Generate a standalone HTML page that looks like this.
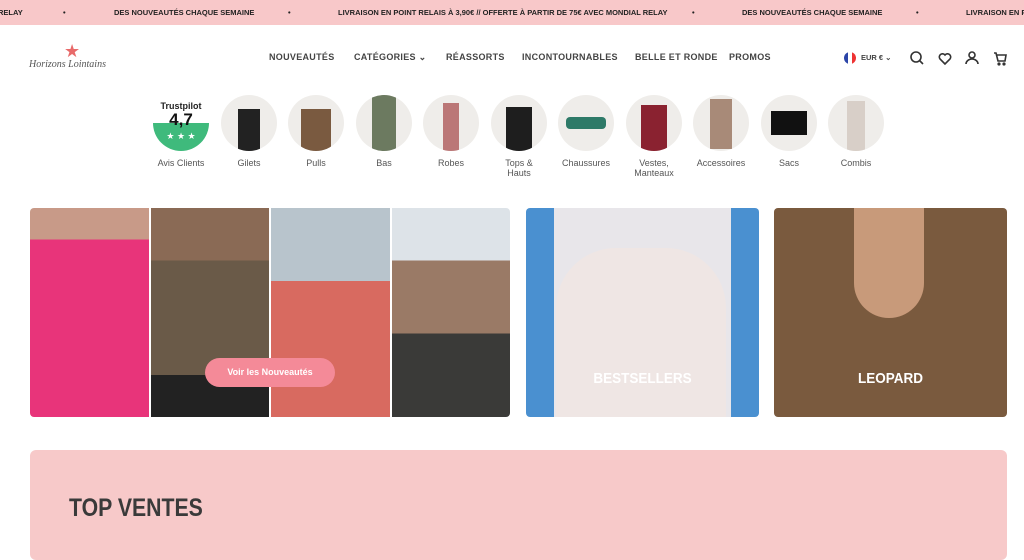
<!DOCTYPE html>
<html><head><meta charset="utf-8"><style>
*{margin:0;padding:0;box-sizing:border-box}
body{width:1024px;height:546px;overflow:hidden;background:#fff;font-family:"Liberation Sans",sans-serif;color:#333;position:relative}
.bar{position:absolute;left:0;top:0;width:1024px;height:25px;background:#f8c8c9;font-size:7.5px;font-weight:bold;color:#222}
.bar span{position:absolute;top:8px;white-space:nowrap}
.nav span{position:absolute;top:52px;font-size:9px;font-weight:bold;color:#444;letter-spacing:.3px}
.c{position:absolute;top:95px;width:56px;height:56px;border-radius:50%;background:#efedea;overflow:hidden}
.lab{position:absolute;top:158px;width:80px;text-align:center;font-size:9px;color:#555;line-height:10px}
.card{position:absolute;top:208px;height:209px;border-radius:4px;overflow:hidden}
.cl{position:absolute;top:162px;width:233px;text-align:center;color:#fff;font-weight:bold;font-size:15px;transform:scaleX(.9)}
</style></head><body>
<div class="bar">
<span style="left:-2px">RELAY</span><span style="left:63px">•</span>
<span style="left:114px">DES NOUVEAUTÉS CHAQUE SEMAINE</span><span style="left:288px">•</span>
<span style="left:338px">LIVRAISON EN POINT RELAIS À 3,90€ // OFFERTE À PARTIR DE 75€ AVEC MONDIAL RELAY</span><span style="left:692px">•</span>
<span style="left:742px">DES NOUVEAUTÉS CHAQUE SEMAINE</span><span style="left:916px">•</span>
<span style="left:966px">LIVRAISON EN PO</span>
</div>
<div style="position:absolute;left:64px;top:41px;color:#e86a6a;font-size:18px">★</div>
<div style="position:absolute;left:29px;top:59px;font-family:'Liberation Serif',serif;font-style:italic;font-size:10px;color:#555">Horizons Lointains</div>
<div class="nav">
<span style="left:269px">NOUVEAUTÉS</span><span style="left:354px">CATÉGORIES ⌄</span><span style="left:446px">RÉASSORTS</span><span style="left:522px">INCONTOURNABLES</span><span style="left:635px">BELLE ET RONDE</span><span style="left:729px">PROMOS</span>
</div>
<div style="position:absolute;left:844px;top:52px;width:12px;height:12px;border-radius:50%;background:linear-gradient(90deg,#2b45a8 33%,#fff 33% 66%,#e33 66%)"></div>
<div style="position:absolute;left:861px;top:53px;font-size:7.5px;font-weight:bold;color:#444">EUR € ⌄</div>
<svg style="position:absolute;left:908px;top:49px" width="100" height="18" fill="none" stroke="#333" stroke-width="1.6">
<circle cx="8" cy="8" r="5"/><path d="M12 12l3 3"/>
<path d="M37 15l-5-5a3 3 0 0 1 5-4a3 3 0 0 1 5 4z"/>
<circle cx="64" cy="6" r="3"/><path d="M58 15a6 5 0 0 1 12 0"/>
<path d="M86 4h2l2 8h7l1-6h-9"/><circle cx="91" cy="15" r=".8"/><circle cx="96" cy="15" r=".8"/>
</svg>
<div class="c" style="left:153px;background:#fff;overflow:visible">
<div style="position:absolute;left:0;top:0;width:56px;height:56px;border-radius:50%;overflow:hidden"><div style="position:absolute;top:28px;width:56px;height:28px;background:#3fba7c"></div></div>
<div style="position:absolute;top:6px;width:56px;text-align:center;font-size:9px;font-weight:bold;color:#222">Trustpilot</div>
<div style="position:absolute;top:15px;width:56px;text-align:center;font-size:17px;font-weight:bold;color:#111">4,7</div>
<div style="position:absolute;top:36px;width:56px;text-align:center;font-size:9px;color:#fff">★ ★ ★</div></div>
<div class="c" style="left:221px"><div style="margin:14px auto;width:22px;height:42px;background:#222"></div></div>
<div class="c" style="left:288px"><div style="margin:14px auto;width:30px;height:42px;background:#7a5a40"></div></div>
<div class="c" style="left:356px"><div style="margin:0 auto;width:24px;height:56px;background:#6c7a60"></div></div>
<div class="c" style="left:423px"><div style="margin:8px auto;width:16px;height:48px;background:#b77"></div></div>
<div class="c" style="left:491px"><div style="margin:12px auto;width:26px;height:44px;background:#1e1e1e"></div></div>
<div class="c" style="left:558px"><div style="margin:22px auto;width:40px;height:12px;background:#2e7a68;border-radius:4px"></div></div>
<div class="c" style="left:626px"><div style="margin:10px auto;width:26px;height:46px;background:#8a2230"></div></div>
<div class="c" style="left:693px"><div style="margin:4px auto;width:22px;height:50px;background:#a88a78"></div></div>
<div class="c" style="left:761px"><div style="margin:16px auto;width:36px;height:24px;background:#111"></div></div>
<div class="c" style="left:828px"><div style="margin:6px auto;width:18px;height:50px;background:#d8cfc8"></div></div>
<div class="lab" style="left:141px">Avis Clients</div><div class="lab" style="left:209px">Gilets</div><div class="lab" style="left:276px">Pulls</div><div class="lab" style="left:344px">Bas</div><div class="lab" style="left:411px">Robes</div><div class="lab" style="left:479px">Tops &amp;<br>Hauts</div><div class="lab" style="left:546px">Chaussures</div><div class="lab" style="left:614px">Vestes,<br>Manteaux</div><div class="lab" style="left:681px">Accessoires</div><div class="lab" style="left:749px">Sacs</div><div class="lab" style="left:816px">Combis</div>
<div class="card" style="left:30px;width:480px;display:flex;gap:2px;background:#fff">
<div style="flex:1;background:linear-gradient(#c89a88 0 15%,#e8347a 15%)"></div>
<div style="flex:1;background:linear-gradient(#8a6a55 0 25%,#6a5a48 25% 80%,#222 80%)"></div>
<div style="flex:1;background:linear-gradient(#b8c4cc 0 35%,#d86a60 35%)"></div>
<div style="flex:1;background:linear-gradient(#dde3e8 0 25%,#9a7a66 25% 60%,#3a3a38 60%)"></div>
</div>
<div style="position:absolute;left:205px;top:358px;width:130px;height:29px;border-radius:15px;background:#f48a98;color:#fff;font-size:9px;font-weight:bold;text-align:center;line-height:29px">Voir les Nouveautés</div>
<div class="card" style="left:526px;width:233px;background:linear-gradient(90deg,#4a90d0 0 12%,#e8e6ea 12% 88%,#4a90d0 88%)"><div style="position:absolute;left:30px;top:40px;width:170px;height:169px;background:#efe6e4;border-radius:60px 60px 0 0"></div><div class="cl">BESTSELLERS</div></div>
<div class="card" style="left:774px;width:233px;background:#7a5a3e"><div style="position:absolute;left:80px;top:0;width:70px;height:110px;background:#c89a7a;border-radius:0 0 40px 40px"></div><div class="cl">LEOPARD</div></div>
<div style="position:absolute;left:30px;top:450px;width:977px;height:110px;background:#f7c9c9;border-radius:6px"></div>
<div style="position:absolute;left:69px;top:494px;font-size:25px;font-weight:bold;color:#3a3a3a;transform:scaleX(.85);transform-origin:left">TOP VENTES</div>
</body></html>
